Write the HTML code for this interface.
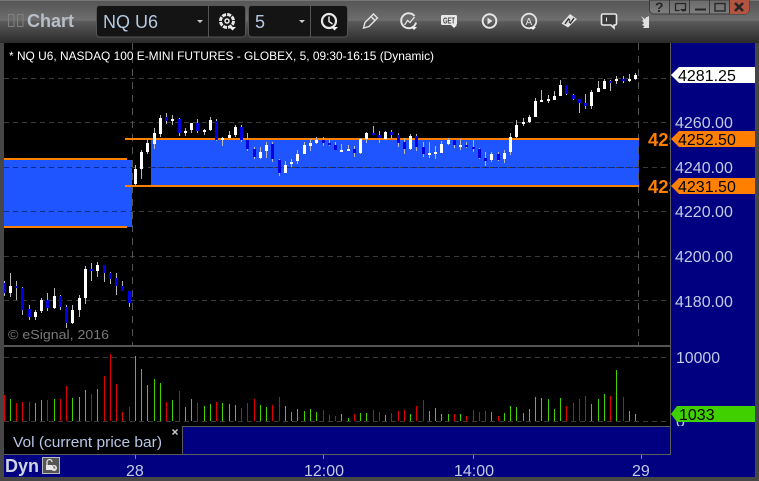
<!DOCTYPE html>
<html><head><meta charset="utf-8"><style>
html,body{margin:0;padding:0;background:#444;width:759px;height:481px;overflow:hidden}
svg{display:block}
text{font-family:"Liberation Sans",sans-serif}
.ax{font-size:16px;fill:#c4cbe4}
.tag{font-size:16px;fill:#000}
.c{shape-rendering:crispEdges}
</style></head><body>
<svg width="759" height="481" viewBox="0 0 759 481" xmlns="http://www.w3.org/2000/svg">
<defs>
<linearGradient id="tb" x1="0" y1="0" x2="0" y2="43" gradientUnits="userSpaceOnUse">
<stop offset="0" stop-color="#8a8a8a"/><stop offset=".03" stop-color="#565656"/><stop offset=".47" stop-color="#6e6e6e"/><stop offset=".5" stop-color="#5a5a5a"/><stop offset="1" stop-color="#2b2b2b"/>
</linearGradient>
<linearGradient id="wb" x1="0" y1="0" x2="0" y2="15" gradientUnits="userSpaceOnUse">
<stop offset="0" stop-color="#6a6a6a"/><stop offset="1" stop-color="#808080"/>
</linearGradient>
<clipPath id="cp"><rect x="4" y="43" width="666" height="302"/></clipPath>
<clipPath id="cl"><rect x="640" y="125" width="30" height="75"/></clipPath>
<clipPath id="cz"><rect x="671" y="400" width="84" height="26"/></clipPath>
</defs>
<rect width="759" height="481" fill="#464646"/>
<rect width="759" height="43" fill="url(#tb)"/>
<!-- toolbar left -->
<g fill="none" stroke="#808080" stroke-width="1"><rect x="8.500" y="14.500" width="5.500" height="12"/><rect x="17.500" y="14.500" width="5.500" height="12"/></g>
<text x="27" y="27" font-size="18" font-weight="bold" fill="#b9bfc8">Chart</text>
<rect x="96.500" y="5.500" width="149" height="31.500" rx="3" fill="#141414" stroke="#555"/>
<rect x="248.500" y="5.500" width="99" height="31.500" rx="3" fill="#141414" stroke="#555"/>
<path d="M208.500 6V37M310.500 6V37" stroke="#555"/>
<text x="103" y="28" font-size="18" fill="#b4c8e0">NQ U6</text>
<text x="255" y="28" font-size="18" fill="#b4c8e0">5</text>
<path d="M197 20h6l-3 3zM299 20h6l-3 3z" fill="#ccc"/>
<!-- gear -->
<g fill="none" stroke="#e8e8e8"><circle cx="227" cy="21" r="6.500" stroke-width="3" stroke-dasharray="4 1.100"/><circle cx="227" cy="21" r="2" stroke-width="1.500"/></g>
<path d="M229 27h7l-3.500 3.500z" fill="#f0f0f0"/>
<!-- clock -->
<g fill="none" stroke="#e8e8e8" stroke-width="2.200"><circle cx="329" cy="21" r="7"/><path d="M329 16.500v5l3.500 2.500" stroke-width="1.500"/></g>
<path d="M331 27h7l-3.500 3.500z" fill="#f0f0f0"/>
<!-- pencil -->
<path d="M363.500 28l1.500-5.500 8.500-8.500 4 4-8.500 8.500zM371 16.500l4 4" fill="none" stroke="#e4e4e4" stroke-width="1.400"/>
<!-- refresh chart -->
<g fill="none" stroke="#e4e4e4"><path d="M414.500 16a7.500 7.500 0 1 0 1.500 6.500" stroke-width="2"/><path d="M404.500 25l3-4.500 2.500 2 4.500-5.500" stroke-width="1.300"/></g>
<path d="M411 27h6l-3 3z" fill="#f0f0f0"/>
<!-- GET -->
<rect x="441" y="15" width="16" height="10" rx="1.500" fill="#e8e8e8"/>
<text x="443" y="23.500" font-size="8" font-weight="bold" fill="#444" textLength="12" lengthAdjust="spacingAndGlyphs">GET</text>
<path d="M451 25h6l-3 3z" fill="#f0f0f0"/>
<!-- play -->
<circle cx="489.500" cy="21" r="6.800" fill="none" stroke="#e4e4e4" stroke-width="2"/><path d="M487.500 17.500l5 3.500-5 3.500z" fill="#e4e4e4"/>
<!-- A -->
<circle cx="529" cy="21" r="7.300" fill="none" stroke="#e4e4e4" stroke-width="1.800"/>
<text x="525.500" y="25" font-size="10" fill="#e4e4e4">A</text>
<path d="M530 27h6l-3 3z" fill="#f0f0f0"/>
<!-- diamond -->
<path d="M570 14l7 5-9 8.500-6.500-4z" fill="#e0e0e0"/><path d="M565 24l3.500-5 1.500 1.500M574 18l-3.500 5-1.500-1.500" stroke="#333" stroke-width="1.500" fill="none"/>
<!-- speech -->
<path d="M603 14h12a1.500 1.500 0 0 1 1.500 1.500v8a1.500 1.500 0 0 1-1.500 1.500h-1v3l-3-3h-8a1.500 1.500 0 0 1-1.500-1.500v-8a1.500 1.500 0 0 1 1.500-1.500z" fill="#3a3a3a" stroke="#e8e8e8" stroke-width="1.600"/><path d="M606.500 17.500v4" stroke="#e8e8e8"/>
<!-- bird -->
<path d="M641 16l4 3 1-1.500 3-1.500v12h-6l1.500-2-2.500-1 2-2-2-2 1.500-1z" fill="#e0e0e0"/>
<!-- window buttons -->
<path d="M649.500 0V10a4 4 0 0 0 4 4H745a4 4 0 0 0 4-4V0z" fill="url(#wb)" stroke="#3a3a3a"/>
<path d="M729.500 0H749V10a4 4 0 0 1-4 4H729.500z" fill="#b2543f"/>
<path d="M669.500 0V14M689.500 0V14M709.500 0V14M729.500 0V14" stroke="#3a3a3a"/>
<text x="655" y="12" font-size="14" font-weight="bold" fill="#262626">?</text>
<path d="M675.500 3.500h10v7h-3M675.500 3.500v7h4" fill="none" stroke="#262626" stroke-width="1.300"/><path d="M680 9h6l-3 3z" fill="#262626"/>
<path d="M695 9.500h11" stroke="#262626" stroke-width="2"/>
<rect x="715" y="3.500" width="10" height="7.500" fill="none" stroke="#262626" stroke-width="1.400"/>
<path d="M735 3l8 8M743 3l-8 8" stroke="#262626" stroke-width="2.600"/>
<!-- main black panes -->
<rect x="4" y="43" width="666" height="383" fill="#000"/>
<rect x="671" y="43" width="84" height="384" fill="#000080"/>
<rect x="4" y="427" width="178" height="27" fill="#000"/>
<rect x="183" y="427" width="487" height="27" fill="#000080"/>
<rect x="671" y="427" width="84" height="28" fill="#000080"/>
<rect x="4" y="455" width="751" height="22" fill="#000080"/>
<!-- blue zones -->
<g clip-path="url(#cp)">
<rect x="4" y="160" width="128" height="67" fill="#1f55ff"/>
<rect x="151" y="140" width="488" height="45" fill="#1f55ff"/>
<path class="c" d="M4 78.500H670M4 122.500H670M4 167.500H670M4 211.500H670M4 256.500H670M4 300.500H670" stroke="#3a3a3a" stroke-dasharray="5 4"/>
<path class="c" d="M4 167.500H132M151 167.500H639M4 211.500H132" stroke="#0a2a90" stroke-dasharray="5 4"/>
<path class="c" d="M132.500 43V345M638.500 43V345" stroke="#555" stroke-dasharray="7 6"/>
<rect x="4" y="158" width="123" height="2" fill="#ff8000"/>
<rect x="4" y="226" width="123" height="2" fill="#ff8000"/>
<rect x="125" y="138" width="514" height="2" fill="#ff8000"/>
<rect x="125" y="185" width="514" height="2" fill="#ff8000"/>
<!-- wicks -->
<path class="c" stroke="#b8b8b8" stroke-width="1" fill="none" d="M4.500 281V296M10.500 273V297M16.500 281V300M22.500 287V315M29.500 305V320M35.500 310V320M41.500 298V313M47.500 293V311M54.500 288V309M60.500 295V310M66.500 305V328M72.500 305V324M79.500 295V317M85.500 266V304M91.500 263V281M97.500 262V277M104.500 265V282M110.500 272V284M116.500 273V295M122.500 281V291M129.500 291V307
M135.500 165V186M141.500 150V179M147.500 139V154M154.500 128V149M160.500 115V137M166.500 113V124M172.500 115V125M179.500 118V136M185.500 128V136M191.500 123V133M197.500 119V133M204.500 129V135M210.500 117V131M216.500 119V141M222.500 137V146M229.500 131V140M235.500 125V137M241.500 125V142M247.500 133V151M254.500 147V159M260.500 147V159M266.500 142V158M272.500 142V162M279.500 159V176M285.500 161V173M291.500 159V167M297.500 150V164M304.500 142V154M310.500 139V151M316.500 137V144M323.500 137V146M329.500 139V146M335.500 142V150M341.500 144V152M348.500 145V151M354.500 146V157M360.500 138V154M366.500 132V143M373.500 126V135M379.500 131V143M385.500 131V140M391.500 130V139M398.500 133V147M404.500 138V154M410.500 134V150M416.500 134V151M423.500 142V157M429.500 142V158M435.500 146V159M441.500 141V153M448.500 138V145M454.500 140V148M460.500 139V150M466.500 142V148M473.500 140V152M479.500 148V159M485.500 152V166M491.500 152V162M498.500 152V161M504.500 150V163M510.500 133V155M516.500 120V138M523.500 118V126M529.500 115V123M535.500 98V117M541.500 90V102M548.500 95V103M554.500 91V100M560.500 80V96M566.500 85V95M573.500 94V100M579.500 99V113M585.500 94V109M591.500 90V109M598.500 81V92M604.500 79V89M610.500 80V91M616.500 76V84M623.500 76V83M629.500 74V82M635.500 73V80"/>
<!-- white bodies -->
<path class="c" fill="#fff" d="M9 286h3v7h-3zM34 312h3v5h-3zM40 300h3v11h-3zM53 296h3v12h-3zM71 310h3v13h-3zM78 298h3v12h-3zM84 269h3v29h-3zM96 265h3v6h-3z
M134 169h3v15h-3zM140 152h3v17h-3zM146 143h3v9h-3zM153 133h3v11h-3zM159 118h3v16h-3zM171 119h3v2h-3zM184 131h3v2h-3zM190 123h3v7h-3zM203 130h3v2h-3zM209 120h3v10h-3zM221 138h3v2h-3zM228 135h3v3h-3zM234 127h3v8h-3zM259 152h3v6h-3zM265 145h3v6h-3zM284 165h3v8h-3zM290 162h3v2h-3zM296 154h3v7h-3zM303 145h3v9h-3zM309 143h3v3h-3zM315 140h3v3h-3zM340 150h3v2h-3zM347 149h3v2h-3zM359 139h3v14h-3zM365 133h3v6h-3zM384 132h3v7h-3zM409 136h3v13h-3zM428 153h3v2h-3zM434 152h3v2h-3zM440 144h3v9h-3zM447 140h3v4h-3zM459 145h3v2h-3zM490 154h3v6h-3zM503 153h3v6h-3zM509 137h3v15h-3zM515 125h3v12h-3zM522 122h3v2h-3zM528 117h3v5h-3zM534 101h3v16h-3zM540 100h3v2h-3zM547 99h3v2h-3zM553 96h3v4h-3zM559 85h3v11h-3zM590 92h3v14h-3zM597 88h3v4h-3zM603 81h3v8h-3zM615 79h3v2h-3zM628 79h3v2h-3zM634 75h3v4h-3z"/>
<!-- blue bodies -->
<path class="c" fill="#0000e0" d="M4 283h2v10h-2zM15 286h3v2h-3zM21 288h3v22h-3zM28 309h3v8h-3zM46 300h3v8h-3zM59 296h3v11h-3zM65 307h3v16h-3zM90 269h3v2h-3zM103 265h3v8h-3zM109 273h3v6h-3zM115 278h3v8h-3zM121 286h3v5h-3zM128 291h3v12h-3z
M165 117h3v4h-3zM178 119h3v14h-3zM196 123h3v8h-3zM215 121h3v19h-3zM240 127h3v13h-3zM246 140h3v9h-3zM253 149h3v8h-3zM271 144h3v15h-3zM278 160h3v13h-3zM322 140h3v3h-3zM328 143h3v2h-3zM334 145h3v5h-3zM353 149h3v4h-3zM372 133h3v2h-3zM378 135h3v3h-3zM390 132h3v3h-3zM397 135h3v8h-3zM403 142h3v7h-3zM415 136h3v11h-3zM422 147h3v7h-3zM453 140h3v5h-3zM465 145h3v2h-3zM472 147h3v2h-3zM478 149h3v9h-3zM484 158h3v3h-3zM497 154h3v6h-3zM565 85h3v9h-3zM572 95h3v4h-3zM578 99h3v4h-3zM584 103h3v3h-3zM609 81h3v2h-3zM622 79h3v2h-3z"/>
</g>
<!-- clipped level labels -->
<g clip-path="url(#cl)"><text x="648" y="146" font-size="18.500" font-weight="bold" fill="#ff8000">4252.50</text><text x="648" y="193" font-size="18.500" font-weight="bold" fill="#ff8000">4231.50</text></g>
<!-- title -->
<text x="9" y="60" font-size="12" fill="#fff" textLength="425" lengthAdjust="spacingAndGlyphs">* NQ U6, NASDAQ 100 E-MINI FUTURES - GLOBEX, 5, 09:30-16:15 (Dynamic)</text>
<text x="8" y="339" font-size="13" fill="#7a7a7a" textLength="101" lengthAdjust="spacingAndGlyphs">© eSignal, 2016</text>
<!-- dividers -->
<rect x="4" y="345" width="666" height="2" fill="#555"/>
<rect x="670" y="43" width="1" height="412" fill="#5c5c5c"/>
<rect x="182" y="426" width="489" height="1" fill="#5c5c5c"/>
<rect x="4" y="426" width="178" height="1" fill="#000"/>
<rect x="182" y="426" width="1" height="28" fill="#5c5c5c"/>
<rect x="4" y="454" width="667" height="1" fill="#5c5c5c"/>
<!-- volume -->
<path class="c" d="M4 357.500H670M4 421.500H670" stroke="#3a3a3a" stroke-dasharray="5 4"/>
<path class="c" stroke="#e00000" fill="none" d="M4.500 395V421M16.500 403V421M22.500 402V421M29.500 402V421M47.500 400V421M60.500 399V421M66.500 386V421M91.500 394V421M104.500 376V421M110.500 354V421M116.500 384V421M122.500 412V421M129.500 407V421M166.500 402V421M179.500 391V421M197.500 403V421M216.500 402V421M241.500 408V421M247.500 403V421M254.500 399V421M272.500 405V421M279.500 397V421M323.500 410V421M329.500 415V421M335.500 416V421M354.500 414V421M373.500 410V421M379.500 412V421M391.500 413V421M398.500 411V421M404.500 410V421M416.500 406V421M423.500 400V421M454.500 414V421M466.500 416V421M473.500 410V421M479.500 412V421M485.500 411V421M498.500 416V421M566.500 406V421M573.500 403V421M579.500 399V421M585.500 396V421M610.500 396V421M623.500 397V421"/>
<path class="c" stroke="#3fd300" fill="none" d="M10.500 399V421M35.500 403V421M41.500 400V421M54.500 399V421M72.500 398V421M79.500 397V421M85.500 390V421M97.500 389V421M135.500 356V421M141.500 369V421M147.500 385V421M154.500 379V421M160.500 383V421M172.500 400V421M185.500 407V421M191.500 399V421M204.500 406V421M210.500 404V421M222.500 403V421M229.500 404V421M235.500 405V421M260.500 405V421M266.500 407V421M285.500 406V421M291.500 412V421M297.500 409V421M304.500 411V421M310.500 409V421M316.500 412V421M341.500 414V421M348.500 418V421M360.500 413V421M366.500 413V421M385.500 415V421M410.500 414V421M429.500 411V421M435.500 408V421M441.500 414V421M448.500 414V421M460.500 414V421M491.500 412V421M504.500 413V421M510.500 406V421M516.500 407V421M523.500 413V421M529.500 409V421M535.500 397V421M541.500 398V421M548.500 399V421M554.500 409V421M560.500 398V421M591.500 404V421M598.500 399V421M604.500 394V421M616.500 370V421M629.500 411V421M635.500 414V421"/>
<!-- right axis labels -->
<text class="ax" x="675" y="128">4260.00</text>
<text class="ax" x="675" y="173">4240.00</text>
<text class="ax" x="675" y="217">4220.00</text>
<text class="ax" x="675" y="262">4200.00</text>
<text class="ax" x="675" y="307">4180.00</text>
<text class="ax" x="676" y="363" textLength="44" lengthAdjust="spacingAndGlyphs">10000</text>
<g clip-path="url(#cz)"><text class="ax" x="676" y="427">0</text></g>
<!-- tags -->
<path d="M671 75l8-8h76v16h-76z" fill="#fff"/><text class="tag" x="678" y="81">4281.25</text>
<path d="M671 139l8-8h76v16h-76z" fill="#ff8000"/><text class="tag" x="678" y="145">4252.50</text>
<path d="M671 186l8-8h76v16h-76z" fill="#ff8000"/><text class="tag" x="678" y="192">4231.50</text>
<path d="M671 414l6-8h78v16h-78z" fill="#40d000"/><text class="tag" x="679" y="420">1033</text>
<!-- vol label -->
<text x="13" y="447" font-size="15" fill="#b8c6e6" textLength="149" lengthAdjust="spacingAndGlyphs">Vol (current price bar)</text>
<path d="M172.500 429.500l5 5M177.500 429.500l-5 5" stroke="#c8c8c8" stroke-width="1.500"/>
<!-- bottom axis -->
<path d="M135.500 455V459M323.500 455V459M473.500 455V459M641.500 455V459" stroke="#7a80a8"/>
<text x="5" y="472" font-size="18" font-weight="bold" fill="#d0d4e0">Dyn</text>
<rect x="42.500" y="457.500" width="17" height="16" fill="#555" stroke="#bbb"/>
<path d="M47 465v-3a2.500 2.500 0 0 1 5 0" fill="none" stroke="#e8e8e8" stroke-width="1.200"/><rect x="46" y="465" width="6" height="5" fill="#e8e8e8"/><circle cx="54" cy="468" r="3" fill="#e8e8e8"/><path d="M54 466v2h1.500" stroke="#333" fill="none" stroke-width=".8"/>
<text class="ax" x="126" y="476">28</text>
<text class="ax" x="304" y="476">12:00</text>
<text class="ax" x="454" y="476">14:00</text>
<text class="ax" x="632" y="476">29</text>
</svg>
</body></html>
